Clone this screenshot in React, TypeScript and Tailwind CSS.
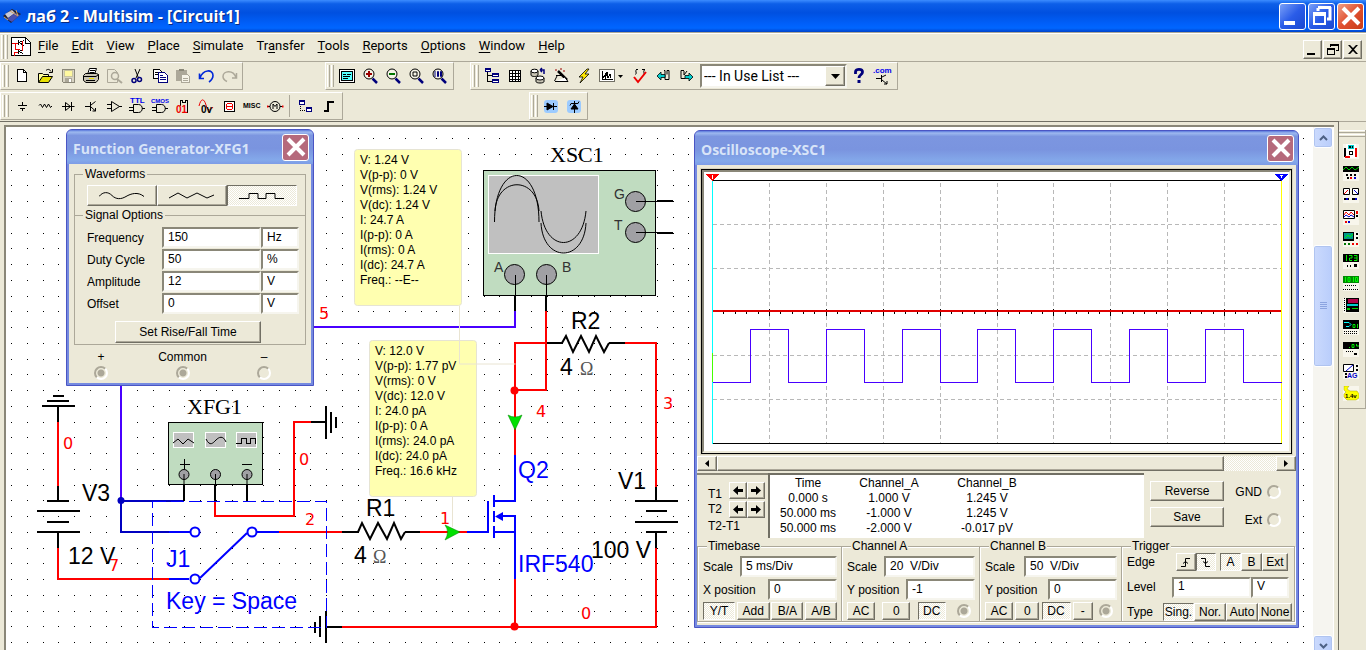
import React from 'react';
import clsx from 'clsx';

const raised =
  'border border-t-white border-l-white border-r-[#716f64] border-b-[#716f64] bg-[#ece9d8] shadow-[inset_-1px_-1px_0_#aca899]';
const pressed =
  'border border-t-[#716f64] border-l-[#716f64] border-r-white border-b-white bg-[repeating-conic-gradient(#fff_0_25%,#ece9d8_0_50%)] bg-[length:2px_2px]';
const sunken =
  'border-2 border-t-[#8a8778] border-l-[#8a8778] border-r-[#f6f5ee] border-b-[#f6f5ee] bg-white';

/* ---------- toolbar icons ---------- */

const Icon: React.FC<{ children: React.ReactNode; smooth?: boolean }> = ({ children, smooth }) => (
  <svg
    width="20"
    height="20"
    viewBox="0 0 20 20"
    fill="none"
    stroke="#000"
    shapeRendering={smooth ? 'auto' : 'crispEdges'}
    aria-hidden="true"
  >
    {children}
  </svg>
);

const Lens: React.FC<{ children: React.ReactNode }> = ({ children }) => (
  <Icon smooth>
    <path d="M12.500 12.500l4.500 4.500" stroke="#00007b" strokeWidth="2.500" />
    <circle cx="9" cy="8" r="5" fill="#f6f4e8" />
    {children}
  </Icon>
);

const fileIcons: [string, React.ReactNode][] = [
  ['New', <Icon><path d="M5.500 3.500h6l3 3v9h-9z" fill="#fff" /><path d="M11.500 3.500v3h3" /></Icon>],
  ['Open', (
    <Icon smooth>
      <path d="M3.500 16V7.500h4l1 1h5V11" fill="#ff9" />
      <path d="M3.500 16.500l4-6h10l-4 6z" fill="#e8e000" />
      <path d="M11 4.500c2-2 4-1 5 1m1.500-2.500v3.500h-3.500" />
    </Icon>
  )],
  ['Save', (
    <Icon>
      <path d="M4 3.500h12.500v13h-11l-1.500-2z" fill="#d8d4c4" stroke="#8a8778" />
      <path d="M6 4h8v6H6z" fill="#fff9a0" stroke="#c8c4a0" />
      <path d="M7 12h7v4H7z" fill="#aca899" stroke="none" />
      <path d="M11 13h2v3h-2z" fill="#fff" stroke="none" />
    </Icon>
  )],
  ['Print', (
    <Icon smooth>
      <path d="M6.500 8.500l2-6h7l-2 6" fill="#fff" />
      <path d="M9 4.500h5M8.500 6.500h5" />
      <path d="M2.500 9.500l2-2h11l2 1v5l-2.500 3h-10l-2.500-2z" fill="#c8c4b4" />
      <path d="M3 10.500h12l2.500-2M5 14.500h9" />
      <path d="M8 12.500h5" stroke="#e8e000" />
    </Icon>
  )],
  ['Print preview', (
    <Icon smooth>
      <path d="M3.500 3.500h7l3 3v10h-10z" stroke="#aca899" />
      <circle cx="11" cy="10" r="3.500" fill="#ece9d8" stroke="#aca899" strokeWidth="1.500" />
      <path d="M13 13l5 4" stroke="#aca899" strokeWidth="2" />
    </Icon>
  )],
  ['Cut', (
    <Icon smooth>
      <path d="M8 3l3.500 9M13 3l-4 9" />
      <circle cx="7" cy="14.500" r="2" stroke="#00007b" strokeWidth="1.500" />
      <circle cx="12.500" cy="13.500" r="2" stroke="#00007b" strokeWidth="1.500" />
    </Icon>
  )],
  ['Copy', (
    <Icon>
      <path d="M3.500 3.500h6l2 2v7h-8z" fill="#fff" />
      <path d="M5 6.500h4M5 8.500h4" />
      <path d="M8.500 6.500h6l3 3v7h-9z" fill="#fff" stroke="#00007b" />
      <path d="M10 9.500h3M10 11.500h6M10 13.500h6" stroke="#00007b" />
    </Icon>
  )],
  ['Paste', (
    <Icon>
      <path d="M3 4h11v11H3z" fill="#aca899" stroke="none" />
      <path d="M6 3h5v2H6z" fill="#8a8778" stroke="none" />
      <path d="M8.500 8.500h6l2 2v6h-8z" fill="#f6f4e8" stroke="#aca899" />
      <path d="M10 12.500h5M10 14.500h5" stroke="#aca899" />
    </Icon>
  )],
  ['Undo', <Icon smooth><path d="M3.500 7.500v5H8M4 12C7 3 17 3 17 9.500c0 3-2 5-4 6.500" stroke="#0028d8" strokeWidth="1.600" /></Icon>],
  ['Redo', <Icon smooth><path d="M17.500 7v5H13M17 11.500C14 3 4 5 4 10.500c0 3 2 4 4 5" stroke="#aca899" strokeWidth="1.500" /></Icon>],
];

const zoomIcons: [string, React.ReactNode][] = [
  ['Full screen', (
    <Icon>
      <path d="M2.500 3.500h15v13h-15z" fill="#fff" />
      <path d="M4.500 5.500h11v9h-11z" fill="#5ff" />
      <path d="M6 8.500h3M10 8.500h4M6 10.500h7M6 12.500h5" />
    </Icon>
  )],
  ['Zoom in', <Lens><path d="M9 5v6M6 8h6" stroke="#900" strokeWidth="2" /></Lens>],
  ['Zoom out', <Lens><path d="M6 8h6" stroke="#070" strokeWidth="2" /></Lens>],
  ['Zoom area', <Lens><path d="M7 6h4v4H7z" /></Lens>],
  ['Zoom 100', <Lens><path d="M6 5v6M8.500 5.500h1v5h-1zM11.500 5.500h1v5h-1z" stroke="#00007b" /></Lens>],
];

const designIcons: [string, React.ReactNode][] = [
  ['Design toolbox', (
    <Icon>
      <path d="M5.500 6v9h6M5.500 9.500h6" />
      <path d="M3.500 2.500h5v3h-5zM10.500 7.500h6v3h-6zM10.500 13.500h6v3h-6z" fill="#fff" stroke="#00007b" />
      <path d="M3 3h6M10 8h7M10 14h7" stroke="#00007b" strokeWidth="2" />
    </Icon>
  )],
  ['Spreadsheet', (
    <Icon>
      <path d="M4.500 4.500h11v11h-11z" fill="#fff" />
      <path d="M4 7.500h12M4 10.500h12M4 13.500h12M7.500 4v12M10.500 4v12M13.500 4v12" />
    </Icon>
  )],
  ['Database', (
    <Icon smooth>
      <path d="M3 5v4c0 2 7 2 7 0V5" fill="#c8c4b4" />
      <ellipse cx="6.500" cy="5" rx="3.500" ry="1.800" fill="#fff" />
      <path d="M8 12v3.500c0 2 8 2 8 0V12" fill="#c8c4b4" />
      <ellipse cx="12" cy="12" rx="4" ry="2" fill="#fff" />
      <path d="M12 4h4v4M12 4l2-2M12 4l2 2" stroke="#00007b" strokeWidth="1.500" />
    </Icon>
  )],
  ['Wizard', (
    <Icon smooth>
      <path d="M7 5l9 9" strokeWidth="2.500" />
      <path d="M5 9.500h5M4 15.500h13l-3-4M3.500 15l3-6" fill="#fff" />
      <path d="M4 4h2M9 3h2M12 5h2" stroke="#900" />
    </Icon>
  )],
  ['Run analysis', <Icon smooth><path d="M13 3L5 11h4l-3 6 9-9h-4l4-5z" fill="#ffe600" strokeWidth="0.800" /></Icon>],
  ['Grapher', (
    <Icon>
      <path d="M2.500 3.500h15v12h-15z" fill="#fff" stroke="#716f64" />
      <path d="M5.500 5v8.500h10M6 12l2-3v4l2-7 1 6 2-4 1 4" />
    </Icon>
  )],
];

const checkIcons: [string, React.ReactNode][] = [
  ['Rules check', <Icon smooth><path d="M6 3.500h2m4 0h3M6.500 3.500c-2 2 1 3-1 5m9-5c-2 3 1 4-1 6" /><path d="M4 11l4 5 8-10" stroke="#e00" strokeWidth="2" /></Icon>],
  ['Back annotate', (
    <Icon smooth>
      <path d="M11 4.500h1v9h4v-9h-2v4" />
      <path d="M4 10l4-4v2.500h4v3H8V14z" fill="#0cc" strokeWidth="0.800" />
    </Icon>
  )],
  ['Forward annotate', (
    <Icon smooth>
      <path d="M8 4.500H5v8h4M8 5v4l3-4" />
      <path d="M17 11l-4-4v2.500H9v3h4V15z" fill="#0cc" strokeWidth="0.800" />
    </Icon>
  )],
];

const helpIcons: [string, React.ReactNode][] = [
  ['Help', (
    <Icon smooth>
      <path d="M6.500 8V6c0-3.500 7-3.500 7 0 0 3-3.500 2.500-3.500 6" stroke="#00007b" strokeWidth="2.800" />
      <path d="M8.500 14h3v3h-3z" fill="#00007b" stroke="none" />
    </Icon>
  )],
  ['Web', (
    <Icon smooth>
      <text x="1" y="7" fontSize="8" fontWeight="bold" fontFamily="Liberation Sans, sans-serif" fill="#00e" stroke="none">.com</text>
      <path d="M4 12.500h5M9.500 9v7M10 11l4-2M10 14l5 4m0-3v3h-3" />
    </Icon>
  )],
];

const pixelLabel = 'Liberation Sans, sans-serif';

const partIcons: [string, React.ReactNode][] = [
  ['Source', <Icon><path d="M10.500 6v3M6 9.500h9M8 12.500h5M10.500 13v2" /></Icon>],
  ['Basic', <Icon smooth><path d="M4 9.500l1.500-1.500 2 3.500 2-3.500 2 3.500 2-3.500 2 3.500 1.500-1.500" /></Icon>],
  ['Diode', <Icon smooth><path d="M4 10.500h12.500M7.500 6.500v8l5-4zM13.500 6v9" /></Icon>],
  ['Transistor', <Icon smooth><path d="M4 10.500h5M9.500 6v9M10 9l4.500-3.500M10 11l4.500 4m0-3v3h-3" /></Icon>],
  ['Analog', <Icon smooth><path d="M7.500 5.500v10l8-5zM3 8.500h4.500M3 12.500h4.500M15 10.500h3" /></Icon>],
  ['TTL', (
    <Icon smooth>
      <path d="M6.500 8.500v8h5c5 0 5-8 0-8zM2 11.500h4.500M2 14.500h4.500M15 12.500h3" />
      <text x="3" y="7" fontSize="8" fontWeight="bold" fontFamily={pixelLabel} fill="#00e" stroke="none">TTL</text>
    </Icon>
  )],
  ['CMOS', (
    <Icon smooth>
      <path d="M6.500 8.500v8h5c5 0 5-8 0-8zM2 11.500h4.500M2 14.500h4.500M15 12.500h3" />
      <text x="1" y="7" fontSize="6" fontWeight="bold" fontFamily={pixelLabel} fill="#00e" stroke="none">CMOS</text>
    </Icon>
  )],
  ['Misc digital', (
    <Icon>
      <path d="M7.500 10V4.500h2v2h3v-2h2v12h-3" />
      <text x="3" y="17" fontSize="10" fontWeight="bold" fontFamily={pixelLabel} fill="#e00" stroke="none">01</text>
    </Icon>
  )],
  ['Mixed', (
    <Icon smooth>
      <path d="M3 10C5 2 8 2 10 9s4 6 7 2" stroke="#e00" />
      <text x="5" y="17" fontSize="10" fontWeight="bold" fontFamily={pixelLabel} fill="#000" stroke="none">0v</text>
    </Icon>
  )],
  ['Indicator', (
    <Icon>
      <path d="M5.500 5.500h10v10h-10z" fill="#fff" />
      <path d="M8 7.500h5M8 10.500h5M8 13.500h5M7.500 8v5M13.500 8v5" stroke="#e00" />
    </Icon>
  )],
  ['Misc', (
    <Icon smooth>
      <text x="1" y="12" fontSize="7" fontWeight="bold" fontFamily={pixelLabel} fill="#000" stroke="none">MISC</text>
    </Icon>
  )],
  ['Electromechanical', (
    <Icon smooth>
      <circle cx="10" cy="10.500" r="5" />
      <path d="M8 13V8l2 2.500L12 8v5M3 10.500h2M15 10.500h3" />
      <path d="M2 10.500h1.500M17 10.500h1.500" stroke="#e00" strokeWidth="2" />
    </Icon>
  )],
];

const hierarchyIcons: [string, React.ReactNode][] = [
  ['Hierarchical block', (
    <Icon>
      <path d="M4.500 8v6.500h5" strokeDasharray="1 1" />
      <path d="M3.500 4.500h5v4h-5zM10.500 11.500h5v4h-5z" fill="#fff" stroke="#00007b" />
      <path d="M3 5h6M10 12h6" stroke="#00007b" strokeWidth="2" />
    </Icon>
  )],
  ['Bus', <Icon><path d="M5 15h4V6h6" strokeWidth="2" /></Icon>],
];

const virtualIcons: [string, React.ReactNode][] = [
  ['Virtual diode', (
    <Icon smooth>
      <rect x="3" y="4" width="14" height="13" rx="3" fill="#9ccbff" stroke="none" />
      <path d="M3 10.500h13M6 7l6 3.500L6 14z" fill="#000" /><path d="M12.500 7v7" />
    </Icon>
  )],
  ['Virtual zener', (
    <Icon smooth>
      <rect x="3" y="4" width="14" height="13" rx="3" fill="#9ccbff" stroke="none" />
      <path d="M10.500 5v12M7 13l3.500-5 3.500 5z" fill="#000" /><path d="M6 9.500l1-2h7l1-2" />
    </Icon>
  )],
];

const Grip = () => (
  <div className="flex w-[9px] shrink-0 gap-px py-0.5 pl-px">
    <span className="w-[3px] border-r border-l border-l-white border-r-[#aca899]" />
    <span className="w-[3px] border-r border-l border-l-white border-r-[#aca899]" />
  </div>
);

const Tools: React.FC<{ items: [string, React.ReactNode][] }> = ({ items }) => (
  <>
    {items.map(([label, icon]) => (
      <button key={label} aria-label={label} className="flex w-[23px] items-center justify-center">
        {icon}
      </button>
    ))}
  </>
);

const Toolbar: React.FC<{ className?: string; children: React.ReactNode }> = ({ className, children }) => (
  <div className={clsx('flex h-7 border border-t-white border-l-white border-r-[#aca899] border-b-[#aca899]', className)}>
    <Grip />
    {children}
  </div>
);

/* ---------- schematic ---------- */

const PITCH = 15.75;
const gridDots = () => {
  let d = '';
  for (let row = 0; row < 60; row++) {
    for (let col = 0; col < 160; col++) {
      d += `M${Math.round(11 + col * PITCH)} ${Math.round(138 + row * PITCH)}h1v1h-1z`;
    }
  }
  return d;
};
const dots = gridDots();

const netLabels: [number, number, string][] = [
  [319, 319, '5'], [663, 409, '3'], [536, 417, '4'], [63, 449, '0'], [299, 465, '0'],
  [305, 525, '2'], [440, 524, '1'], [581, 619, '0'], [109, 571, '7'],
];

const partLabels: [number, number, string][] = [
  [571, 329, 'R2'], [560, 375, '4'], [618, 489, 'V1'], [366, 516, 'R1'], [354, 563, '4'],
  [591, 558, '100 V'], [82, 501, 'V3'], [68, 564, '12 V'],
];

const blueLabels: [number, number, string][] = [
  [518, 478, 'Q2'], [518, 572, 'IRF540'], [166, 567, 'J1'], [166, 609, 'Key = Space'],
];

const probes = [
  {
    x: 354, y: 149,
    lines: ['V: 1.24 V', 'V(p-p): 0 V', 'V(rms): 1.24 V', 'V(dc): 1.24 V', 'I: 24.7 A', 'I(p-p): 0 A', 'I(rms): 0 A', 'I(dc): 24.7 A', 'Freq.: --E--'],
  },
  {
    x: 369, y: 340,
    lines: ['V: 12.0 V', 'V(p-p): 1.77 pV', 'V(rms): 0 V', 'V(dc): 12.0 V', 'I: 24.0 pA', 'I(p-p): 0 A', 'I(rms): 24.0 pA', 'I(dc): 24.0 pA', 'Freq.: 16.6 kHz'],
  },
];

const Schematic = () => (
  <svg className="absolute inset-0 h-full w-full" fill="none" fontFamily="Liberation Sans, sans-serif">
    <g transform="translate(-6 -127)">
      <path d={dots} fill="#000" shapeRendering="crispEdges" />

      <g stroke="#f00" strokeWidth="2" shapeRendering="crispEdges">
        <path d="M58 422v64M58 547v32h111M215 501v15h79v-94h17M279 532h63M420 532h47" />
        <path d="M547 343h-32v112M515 390h31v-79M625 343h31v144M656 548v79H342M515 579v48" />
      </g>
      <path d="M314 327h201v-16M121 386v115" stroke="#4800ff" strokeWidth="2" shapeRendering="crispEdges" />
      <path d="M121 501h63M121 501v31h48" stroke="#0000c0" strokeWidth="2" shapeRendering="crispEdges" />

      {/* grounds, batteries and pin stubs */}
      <g stroke="#000" strokeWidth="2" shapeRendering="crispEdges">
        <path d="M53 396h11M47 401h22M42 406h33M58 406v16M58 486v15M47 501h22M37 511h43M47 522h22M37 532h43M58 532v16" />
        <path d="M311 422h15M326 406v33M331 412v21M336 417v11" />
        <path d="M326 611v32M320 616v21M315 622v11M326 627h16" />
        <path d="M656 487v14M635 501h43M646 511h21M635 522h43M646 532h21M656 532v16" />
        <path d="M342 532h16M405 532h15M547 343h15M609 343h16M515 296v15M546 296v15M657 201h16M657 233h16" />
        <path d="M184 485v16M215 485v16M247 485v16" />
      </g>
      <path d="M358 532l4-9 8 16 8-16 9 16 7-16 7 16 4-7M562 343l4-7 7 16 8-16 8 16 7-16 8 16 5-9" stroke="#000" strokeWidth="2" />

      {/* switch */}
      <path d="M152.500 501.500h174v126h-174z" stroke="#00f" strokeDasharray="13 5" shapeRendering="crispEdges" />
      <g stroke="#00f" strokeWidth="2">
        <path d="M169 532h21M169 579h20M257 532h22M200 578l47-45" />
        <circle cx="195" cy="532" r="4.500" fill="#fff" />
        <circle cx="195" cy="579" r="4.500" fill="#fff" />
        <circle cx="252" cy="532" r="4.500" fill="#fff" />
      </g>

      {/* mosfet */}
      <g stroke="#00f" strokeWidth="2" shapeRendering="crispEdges">
        <path d="M515 455v46h-21M494 495v12M494 511v11M494 526v12M488 501v31h-21M494 532h21M503 516h12v63" />
      </g>
      <path d="M495 516.500l8-4.500v9z" fill="#00f" />

      <circle cx="121" cy="500.500" r="3.500" fill="#0000c0" />
      <circle cx="514.500" cy="390.500" r="4" fill="#f00" />
      <circle cx="514.500" cy="626.500" r="4" fill="#f00" />

      {/* function generator symbol */}
      <g shapeRendering="crispEdges">
        <path d="M168.500 422.500h94v62h-94z" fill="#c0dcc0" stroke="#000" />
        <path d="M173.500 432.500h20v15h-20zM205.500 432.500h20v15h-20zM236.500 432.500h20v15h-20z" fill="#c0c0c0" stroke="#fff" />
        <path d="M236 443.500h5.500v-5h5v5h4v-5h5v5M184.500 459v10M180 464.500h10M242 464.500h10" stroke="#000" />
      </g>
      <path d="M173 443l5-4 5 5 5-5 6 4M206 439c4 8 7 4 10 1s7-5 10 2" stroke="#000" />
      {[184, 215.5, 247].map(cx => (
        <g key={cx} stroke="#000">
          <circle cx={cx} cy="474.500" r="5" fill="#a0a0a4" />
          <path d={`M${cx} 474v11`} />
        </g>
      ))}

      {/* oscilloscope symbol */}
      <g shapeRendering="crispEdges">
        <path d="M483.500 170.500h172v125h-172z" fill="#c0dcc0" stroke="#000" />
        <path d="M488.500 175.500h110v78h-110z" fill="#c0c0c0" stroke="#fff" />
      </g>
      <g stroke="#000">
        <path d="M494.500 222C494.500 160 539 160 539 222M495 211c2-35 42-35 44 0M541 223c2 40 43 40 45 0M541 211c4 42 41 42 45 0" />
        <circle cx="514.500" cy="274.500" r="10" fill="#a0a0a4" />
        <circle cx="546.500" cy="274.500" r="10" fill="#a0a0a4" />
        <circle cx="635.500" cy="201.500" r="10" fill="#a0a0a4" />
        <circle cx="635.500" cy="232.500" r="10" fill="#a0a0a4" />
        <path d="M515.500 275v21M546.500 275v21M636 201.500h21M636 232.500h21" />
      </g>
      <g fill="#333" fontSize="14">
        <text x="494" y="272">A</text>
        <text x="562" y="272">B</text>
        <text x="614" y="199">G</text>
        <text x="614" y="230">T</text>
      </g>

      {probes.map(probe => (
        <g key={probe.x}>
          <rect x={probe.x + 0.5} y={probe.y + 0.5} width="107" height="156" rx="3" fill="#ffffb0" stroke="#e6e4d4" />
          <text fontSize="12" fill="#000">
            {probe.lines.map((line, i) => (
              <tspan key={line} x={probe.x + 6} y={probe.y + 15 + i * 15}>{line}</tspan>
            ))}
          </text>
        </g>
      ))}
      <path d="M459.500 306v58h56M452.500 497v30" stroke="#e9e4d2" />
      <path d="M508 415q7 4 14 0l-7 15zM445 525q5 7 0 15l15-8z" fill="#00e000" stroke="#008000" strokeWidth="0.500" />

      <g fill="#000" fontSize="22" fontFamily="Liberation Serif, serif">
        <text x="550" y="162">XSC1</text>
        <text x="187" y="414">XFG1</text>
      </g>
      <g fill="#555" fontSize="18" fontFamily="Liberation Serif, serif">
        <text x="580" y="375">Ω</text>
        <text x="373" y="563">Ω</text>
      </g>
      <g fontSize="23">
        <g fill="#000">{partLabels.map(([x, y, t]) => <text key={`${x}-${y}`} x={x} y={y}>{t}</text>)}</g>
        <g fill="#00f">{blueLabels.map(([x, y, t]) => <text key={t} x={x} y={y}>{t}</text>)}</g>
      </g>
      <g fill="#f00" fontSize="16" fontFamily="DejaVu Sans, sans-serif">
        {netLabels.map(([x, y, t]) => <text key={`${x}-${y}`} x={x} y={y}>{t}</text>)}
      </g>
    </g>
  </svg>
);

/* ---------- instrument windows ---------- */

const Radio: React.FC<{ name: string; label: string; on?: boolean }> = ({ name, label, on }) => (
  <input
    type="radio"
    name={name}
    aria-label={label}
    defaultChecked={on}
    className="size-3.5 shrink-0 appearance-none rounded-full border-2 border-t-[#aca899] border-r-white border-b-white border-l-[#aca899] checked:bg-[radial-gradient(#aca899_3px,transparent_4px)]"
  />
);

const Field: React.FC<{ label: string; value: string; className?: string }> = ({ label, value, className }) => (
  <input aria-label={label} defaultValue={value} className={clsx(sunken, 'h-[21px] min-w-0 pb-0.5 pl-1', className)} />
);

const Key: React.FC<{ down?: boolean; label?: string; className?: string; children: React.ReactNode }> = ({ down, label, className, children }) => (
  <button
    aria-label={label}
    aria-pressed={down}
    className={clsx(down ? pressed : raised, 'flex items-center justify-center whitespace-nowrap', className)}
  >
    {children}
  </button>
);

const Dialog: React.FC<{ title: string; className: string; children: React.ReactNode }> = ({ title, className, children }) => (
  <section className={clsx('absolute flex flex-col rounded-t-md border border-[#4a55c4] bg-[#758ae0] px-0.5 pb-0.5 font-[Liberation_Sans,sans-serif] text-xs text-black', className)}>
    <header className="-mx-0.5 flex h-[34px] shrink-0 items-center justify-between rounded-t-[5px] bg-[linear-gradient(#5a78dc_0,#9db9ef_6%,#7c96e0_16%,#7a94df_55%,#84a9ea_88%,#7d9ce6)] pr-1 pl-1.5">
      <h2 className="pt-1 font-[Open_Sans,sans-serif] text-sm font-bold text-[#d8e4f8]">{title}</h2>
      <button aria-label={`Close ${title}`} className="flex size-[27px] items-center justify-center rounded-[3px] border border-white bg-[#b56a7c]">
        <svg width="20" height="20" viewBox="0 0 20 20" stroke="#fff" strokeWidth="4"><path d="M2 2l16 16M18 2L2 18" /></svg>
      </button>
    </header>
    <div className="flex-1 bg-[#ece9d8]">{children}</div>
  </section>
);

const etched = 'border-[#aca899] shadow-[inset_1px_1px_0_#fff,1px_1px_0_#fff]';

const signalRows = [
  ['Frequency', '150', 'Hz'],
  ['Duty Cycle', '50', '%'],
  ['Amplitude', '12', 'V'],
  ['Offset', '0', 'V'],
];

const waveforms: [string, string][] = [
  ['Sine', 'M0 6.500c4-5 9-5 13-1s9 4 14 1 12-5 18 0'],
  ['Triangle', 'M0 8l9-5 9 5 10-5 10 5 7-3'],
  ['Square', 'M0 8.500h10v-5h9v5h8v-5h9v5h9'],
];

const FunctionGenerator = () => (
  <Dialog title="Function Generator-XFG1" className="top-0.5 left-[60px] w-[248px]">
    <div className="px-[5px] pt-[3px]">
      <fieldset className="w-[232px] border border-b-0 border-[#aca899] pb-[9px] pl-3">
        <legend className="-ml-1 px-0.5 leading-[14px]">Waveforms</legend>
        <div className="flex pt-1">
          {waveforms.map(([name, d], i) => (
            <Key key={name} label={name} down={i === 2} className="h-[21px] w-[70px]">
              <svg width="46" height="11" viewBox="0 0 46 11" fill="none" stroke="#000"><path d={d} /></svg>
            </Key>
          ))}
        </div>
      </fieldset>
      <fieldset className="-mt-[7px] w-[232px] border border-[#aca899] pb-px pl-3">
        <legend className="-ml-1 px-0.5 leading-[14px]">Signal Options</legend>
        <div className="flex flex-col gap-px pt-[5px]">
          {signalRows.map(([name, value, unit]) => (
            <div key={name} className="flex h-[21px] items-center">
              <label htmlFor={name} className="w-[75px]">{name}</label>
              <input id={name} defaultValue={value} className={clsx(sunken, 'h-[21px] w-[99px] pb-0.5 pl-1')} />
              <Field label={`${name} unit`} value={unit} className="w-[38px]" />
            </div>
          ))}
        </div>
        <Key className="mt-[7px] ml-7 h-[22px] w-[146px]">Set Rise/Fall Time</Key>
      </fieldset>
      <div className="flex justify-between pt-1 pr-[15px] pb-[3px] leading-4">
        {['+', 'Common', '–'].map((t, i) => (
          <label key={t} className="flex w-[54px] flex-col items-center gap-px">
            {t}
            <Radio name={`terminal-${i}`} label={t} on={i < 2} />
          </label>
        ))}
      </div>
    </div>
  </Dialog>
);

const gridX = [769, 826, 883, 940, 997, 1053, 1110, 1167, 1224];
const gridY = [224, 268, 355, 399];

const scopeTicks = () => {
  let d = '';
  for (let i = 1; i < 50; i++) {
    const x = Math.round(712 + i * 11.38);
    d += i % 5 === 0 ? `M${x}.5 309v7` : `M${x}.5 312v2`;
  }
  return d;
};

const Plot = () => (
  <svg className="block h-full w-full" fill="none" shapeRendering="crispEdges">
    <g transform="translate(-704 -172)">
      <g stroke="#b8b8b8" strokeDasharray="4 3">
        {gridX.map(x => <path key={x} d={`M${x}.5 183v260`} />)}
        {gridY.map(y => <path key={y} d={`M713 ${y}.5h568`} />)}
      </g>
      <path d="M712 180.500h570M712 443.500h570M712 311.500h570" stroke="#000" />
      <path d={scopeTicks()} stroke="#000" />
      <path d="M713 311h568" stroke="#e00000" strokeWidth="2" />
      <path d="M1281.500 181v262" stroke="#ff0" />
      <path d="M712.500 180v264" stroke="#0ff" />
      <path d="M712.500 353v29" stroke="#4f0" />
      <path
        d="M713 382.500h37.500v-53h38v53h38v-53h38v53h38v-53h38v53h37v-53h38v53h38v-53h38v53h38v-53h38v53h38v-53h38v53h38"
        stroke="#4800ff"
      />
      <path d="M706 174h13l-6.500 7z" fill="#f00" />
      <path d="M1275 174h13l-6.500 7z" fill="#00f" />
      <path d="M712.500 175v4M1280 175.500h3M1281.500 176v2" stroke="#fff" />
    </g>
  </svg>
);

const readings = [
  ['0.000 s', '1.000 V', '1.245 V'],
  ['50.000 ms', '-1.000 V', '1.245 V'],
  ['50.000 ms', '-2.000 V', '-0.017 pV'],
];

const Arrow: React.FC<{ left?: boolean }> = ({ left }) => (
  <svg width="10" height="9" viewBox="0 0 10 9" fill="#000">
    <path d={left ? 'M0 4.500L5 0v3h5v3H5v3z' : 'M10 4.500L5 0v3H0v3h5v3z'} />
  </svg>
);

const Group: React.FC<{ title: string; className?: string; children: React.ReactNode }> = ({ title, className, children }) => (
  <fieldset className={clsx('min-w-0 border border-r-0 pl-[5px] last:border-r', etched, className)}>
    <legend className="ml-1 bg-[#ece9d8] px-px leading-[14px]">{title}</legend>
    {children}
  </fieldset>
);

const Channel: React.FC<{ title: string; scale: string; position: string; scaleGap: string; keys: [string, string][]; axis: string; radio?: boolean }> = ({
  title, scale, position, scaleGap, keys, axis, radio,
}) => (
  <Group title={title}>
    <div className="flex flex-col gap-0.5 pt-[3px] pr-1">
      <div className="flex items-center">
        <span className={scaleGap}>Scale</span>
        <Field label={`${title} scale`} value={scale} className="flex-1" />
      </div>
      <div className="flex items-center">
        <span className="flex-1 whitespace-nowrap">{axis} position</span>
        <Field label={`${title} position`} value={position} className="w-[69px]" />
      </div>
      <div className="flex items-center justify-between">
        {keys.map(([t, width]) => (
          <Key key={t} down={t === 'DC' || t === 'Y/T'} className={clsx('h-[18px]', width)}>{t}</Key>
        ))}
        {radio && <span className="flex px-1"><Radio name={title} label={`${title} terminal`} on /></span>}
      </div>
    </div>
  </Group>
);

const Oscilloscope = () => (
  <Dialog title="Oscilloscope-XSC1" className="top-[3px] left-[688px] w-[605px]">
    <div className="pt-1">
      <div className="mx-1 h-[285px] border border-black bg-white shadow-[0_0_0_1px_#d8d4c0]">
        <div className="h-full border-2 border-t-[#8a8778] border-r-[#ece9d8] border-b-[#ece9d8] border-l-[#8a8778]"><Plot /></div>
      </div>
      <div className="mt-0.5 flex h-[15px]">
        <Key label="Scroll left" className="w-5"><svg width="4" height="7" viewBox="0 0 4 7"><path d="M4 0v7L0 3.500z" /></svg></Key>
        <div className={clsx(raised, 'w-[507px]')} />
        <div className="flex-1 bg-[repeating-conic-gradient(#fff_0_25%,#ece9d8_0_50%)] bg-[length:2px_2px]" />
        <Key label="Scroll right" className="w-5"><svg width="4" height="7" viewBox="0 0 4 7"><path d="M0 0v7l4-3.500z" /></svg></Key>
      </div>
      <div className="flex h-[68px] pt-0.5 pb-px">
        <div className="flex w-[71px] border-t-2 border-[#8a8778] pl-[11px]">
          <div className="w-[21px] pt-3 leading-[15px] whitespace-nowrap">
            <p>T1</p>
            <p>T2</p>
            <p className="pt-0.5">T2-T1</p>
          </div>
          <div className="flex flex-col gap-0.5 pt-[7px]">
            {['T1', 'T2'].map(t => (
              <div key={t} className="flex">
                <Key label={`${t} left`} className="h-[17px] w-[18px]"><Arrow left /></Key>
                <Key label={`${t} right`} className="h-[17px] w-[18px]"><Arrow /></Key>
              </div>
            ))}
          </div>
        </div>
        <div className="w-[376px] border-t-2 border-l-2 border-[#716f64] bg-white pt-px">
          <table className="w-[272px] table-fixed text-center leading-[15px]">
            <thead>
              <tr>
                <th className="w-[76px] font-normal">Time</th>
                <th className="w-[86px] font-normal">Channel_A</th>
                <th className="font-normal">Channel_B</th>
              </tr>
            </thead>
            <tbody>
              {readings.map((row, i) => (
                <tr key={i}>{row.map((cell, j) => <td key={j}>{cell}</td>)}</tr>
              ))}
            </tbody>
          </table>
        </div>
        <div className="flex flex-col gap-1.5 pt-2 pl-1.5">
          <Key className="h-5 w-[74px]">Reverse</Key>
          <Key className="h-5 w-[74px]">Save</Key>
        </div>
        <div className="flex flex-1 flex-col items-end gap-3.5 pt-3 pr-[15px]">
          <label className="flex items-center gap-[5px] leading-[14px]">GND <Radio name="gnd" label="GND" /></label>
          <label className="flex items-center gap-[5px] leading-[14px]">Ext <Radio name="ext" label="Ext" /></label>
        </div>
      </div>
      <div className="grid grid-cols-[144px_138px_142px_1fr] pr-px pb-[3px]">
        <Channel title="Timebase" axis="X" scale="5 ms/Div" position="0" scaleGap="w-[37px]"
          keys={[['Y/T', 'w-8'], ['Add', 'w-[33px]'], ['B/A', 'w-8'], ['A/B', 'w-8']]} />
        <Channel title="Channel A" axis="Y" scale="20  V/Div" position="-1" scaleGap="w-[37px]" radio
          keys={[['AC', 'w-7'], ['0', 'w-7'], ['DC', 'w-7']]} />
        <Channel title="Channel B" axis="Y" scale="50  V/Div" position="0" scaleGap="w-[39px]" radio
          keys={[['AC', 'w-7'], ['0', 'w-6'], ['DC', 'w-[29px]'], ['-', 'w-5']]} />
        <Group title="Trigger">
          <div className="flex h-[68px] flex-col justify-between pr-0.5">
            <div className="flex items-center pr-1">
              <span className="flex-1">Edge</span>
              <Key label="Rising edge" className="h-[18px] w-5">
                <svg width="10" height="11" viewBox="0 0 10 11" fill="none" stroke="#000"><path d="M0 9.500h4.500v-8H9M2 6.500l2.500-2 2.500 2" /></svg>
              </Key>
              <Key down label="Falling edge" className="h-[18px] w-5">
                <svg width="10" height="11" viewBox="0 0 10 11" fill="none" stroke="#000"><path d="M0 1.500h4.500v8H9M2 4.500l2.500 2 2.500-2" /></svg>
              </Key>
              <Key down className="ml-1 h-[18px] w-[21px]">A</Key>
              <Key className="h-[18px] w-[21px]">B</Key>
              <Key className="h-[18px] w-[26px]">Ext</Key>
            </div>
            <div className="flex items-center pr-[3px]">
              <label htmlFor="level" className="flex-1">Level</label>
              <input id="level" defaultValue="1" className={clsx(sunken, 'h-[21px] w-[79px] pb-0.5 pl-1')} />
              <Field label="Level unit" value="V" className="w-[38px]" />
            </div>
            <div className="flex items-center">
              <span className="flex-1">Type</span>
              <Key down className="h-[18px] w-[31px]">Sing.</Key>
              <Key className="h-[18px] w-8">Nor.</Key>
              <Key className="h-[18px] w-8">Auto</Key>
              <Key className="h-[18px] w-[34px]">None</Key>
            </div>
          </div>
        </Group>
      </div>
    </div>
  </Dialog>
);

/* ---------- instrument bar ---------- */

const instruments: [string, React.ReactNode][] = [
  ['Multimeter', <><path fill="#fff" d="M3 0h10v14H3z" /><path fill="#0cc" d="M5 1h6v4H5z" /><path fill="#000" d="M6 2h2v2H6zM9 2h1v2H9zM6 7h4v4H6z" /><path fill="#fff" d="M7 8h2v2H7z" /><path fill="#000" d="M1 4h2v9H1z" /><path fill="#e00" d="M12 4h2v9h-2zM2 12h5v2H2z" /></>],
  ['Function generator', <><path fill="#000" d="M0 0h16v6H0z" /><path stroke="#0c0" fill="none" d="M0 4l3-3 3 3 3-3 3 3 4-3" /><path fill="#000" d="M3 8h2v2H3zM7 8h2v2H7zM11 8h2v2h-2zM4 11h2v2H4z" /><path fill="#e00" d="M7 11h2v2H7z" /><path fill="#00c" d="M11 11h2v2h-2z" /></>],
  ['Wattmeter', <><path fill="#fff" stroke="#000" d="M.5.500h6v6h-6zM9.500.500h6v6h-6z" /><path stroke="#e00" d="M1 6l4-4" /><path stroke="#00c" d="M11 2l4 4" /><path fill="#000" d="M1 10h5v2H1zM9 10h5v2H9z" /><path fill="#00c" d="M3 10h2v2H3zM12 10h2v2h-2z" /></>],
  ['Oscilloscope', <><path fill="#fff" stroke="#000" d="M.5.500h11v8H.5z" /><path stroke="#e00" fill="none" d="M1 5l2-3 3 3 2-3 3 3" /><path stroke="#00c" fill="none" d="M1 7l2-2 3 2 2-2 3 2" /><path fill="#e00" d="M13 1h2v3h-2zM2 11h2v2H2z" /><path fill="#000" d="M13 5h2v2h-2z" /><path fill="#00c" d="M5 11h2v2H5z" /></>],
  ['Four channel oscilloscope', <><path fill="#000" d="M0 0h11v9H0z" /><path fill="#098" d="M1 1h9v6H1z" /><path stroke="#0e0" fill="none" d="M2 6l3-3 2 2 3-3" /><path fill="#000" d="M13 1h2v2h-2zM13 5h2v2h-2z" /><path fill="#070" d="M1 11h2v2H1zM5 11h2v2H5z" /><path fill="#e00" d="M9 11h2v2H9zM13 11h2v2h-2z" /></>],
  ['Frequency counter', <><path fill="#000" d="M0 0h16v8H0z" /><path stroke="#0e0" fill="none" d="M3.500 1v6M6 1.500h3v2.500H6.500v2.500H9M11 1.500h3v5h-3M11 4h3" /><path fill="#000" d="M4 11h1v2H4zM7 11h1v2H7zM11 10h3v3h-3z" /></>],
  ['Word generator', <><path fill="#080" d="M0 0h16v7H0z" /><path stroke="#0f0" fill="none" d="M2.500 1v5M5 1.500h2v4H5zM10.500 1v5M12.500 1.500h2v4h-2z" /><path stroke="#000" strokeDasharray="1 1" d="M2 9.500h12M0 13.500h16" /></>],
  ['Logic analyzer', <><path stroke="#000" strokeDasharray="1 1" d="M1.500 0v14" /><path fill="#000" d="M3 0h13v14H3z" /><path fill="#b00048" d="M5 1h10v4H5z" /><path fill="#0cc" d="M4 6h11v2H4z" /><path fill="#0c0" d="M4 10h3v2H4zM9 10h6v1H9z" /></>],
  ['Logic converter', <><path fill="#000" d="M0 0h16v9H0z" /><path stroke="#0ff" fill="none" d="M1 2.500h5l2 2-2 2H3" /><path stroke="#0e0" fill="none" d="M10 4.500h2v3h-2zM14.500 4v4" /><path stroke="#000" strokeDasharray="1 1" d="M1 11.500h14M1 13.500h14" /></>],
  ['Distortion analyzer', <><path fill="#000" d="M0 0h16v7H0z" /><path stroke="#0e0" fill="none" d="M6 5.500h1M9 2.500h2v3H9zM13.500 2v2H16" /><path stroke="#000" strokeDasharray="1 1" d="M3 9.500h8" /><path fill="#000" d="M11 11h3v2h-3z" /></>],
  ['Agilent generator', <><path fill="#fff" stroke="#000" d="M.5.500h10v7H.5z" /><path stroke="#00c" d="M3 7l7-6" /><path fill="#000" d="M13 1h2v2h-2zM13 5h2v2h-2zM2 9h2v2H2zM2 12h2v2H2z" /><text x="4" y="14" fontSize="7" fontWeight="bold" fill="#00c">AG</text></>],
  ['Measurement probe', <><path fill="#ff0" stroke="#aa0" strokeWidth="0.500" d="M1 0h5L4 3l3 2h7l2 3v4l-3 2H4l-3-3V8L3 6 1 4z" /><text x="2" y="12" fontSize="6" fontWeight="bold" fill="#000">1.4v</text></>],
];

const menus: [string, string, string][] = [
  ['', 'F', 'ile'], ['', 'E', 'dit'], ['', 'V', 'iew'], ['', 'P', 'lace'], ['', 'S', 'imulate'], ['Tr', 'a', 'nsfer'],
  ['', 'T', 'ools'], ['', 'R', 'eports'], ['', 'O', 'ptions'], ['', 'W', 'indow'], ['', 'H', 'elp'],
];

const TitleBar = () => (
  <header className="flex h-8 shrink-0 items-center bg-[linear-gradient(#3c8cff_0,#0d5fe8_12%,#0050e0_40%,#0060fa_75%,#0066ff_88%,#0042c8)] pr-0.5 pl-[3px]">
    <svg width="19" height="16" viewBox="0 0 19 16" className="mr-1">
      <path d="M0 8l9-7 9 5-10 9z" fill="#223" />
      <path d="M2 6l7-4 3 3-7 5z" fill="#c8c8d8" />
      <path d="M4 11l8-6 5 2-8 7z" fill="#4a50b0" />
      <path d="M1 9l4 3M7 3l8 5M13 2l2 6" stroke="#d0a060" />
    </svg>
    <h1 className="flex-1 font-[Open_Sans,sans-serif] text-base font-bold text-white [text-shadow:1px_1px_0_#0a2a80]">лаб 2 - Multisim - [Circuit1]</h1>
    <div className="flex gap-0.5">
      <button aria-label="Minimize" className="flex size-[27px] items-end rounded-[3px] border border-white bg-[linear-gradient(135deg,#7aa0f8,#2a5ce8_50%,#1a48d0)] p-1">
        <span className="h-1 w-[11px] bg-white" />
      </button>
      <button aria-label="Restore" className="flex size-[27px] items-center justify-center rounded-[3px] border border-white bg-[linear-gradient(135deg,#7aa0f8,#2a5ce8_50%,#1a48d0)]">
        <svg width="20" height="20" viewBox="0 0 20 20" fill="none" stroke="#fff" strokeWidth="2">
          <path d="M6 1.500h13M18 1v12h-3M6 2v3" strokeWidth="3" />
          <path d="M2 8h11v10H2z" /><path d="M1 8h13" strokeWidth="4" />
        </svg>
      </button>
      <button aria-label="Close" className="flex size-[27px] items-center justify-center rounded-[3px] border border-white bg-[linear-gradient(135deg,#f0a088,#e05030_50%,#c83c18)]">
        <svg width="20" height="20" viewBox="0 0 20 20" stroke="#fff" strokeWidth="4"><path d="M2 2l16 16M18 2L2 18" /></svg>
      </button>
    </div>
  </header>
);

const MenuBar = () => (
  <nav className="flex h-[30px] shrink-0 items-center border-t border-b border-[#aca899] pr-1 shadow-[inset_0_1px_0_#fff] font-[Roboto,sans-serif] text-[13px] text-black">
    <div className="flex h-full pr-0.5"><Grip /></div>
    <svg width="21" height="20" viewBox="0 0 21 20" fill="none" stroke="#000" shapeRendering="crispEdges" className="mr-[6px]">
      <path d="M.5.500h14l5 5v13H.5z" fill="#fff" />
      <path d="M14.500 1v5h5M7.500 3v5M8 5.500l5-2M8 5.500l5 3M7.500 12v5M8 14.500l4-2M8 14.500l4 2" />
      <path d="M1 6.500h6M4.500 6v6h4M11.500 4v10M3.500 19v-4H7" stroke="#e00" />
    </svg>
    <div className="flex flex-1 gap-[13px] pb-[3px]">
      {menus.map(([before, hot, after]) => (
        <button key={hot + after} className="leading-5">{before}<u className="underline-offset-2">{hot}</u>{after}</button>
      ))}
    </div>
    <div className="flex gap-px pt-1">
      {['M2 12h8v2H2z', 'M5 3h9v7h-3V9h2V5H6v1H5zM2 7h8v7H2zm1 2v4h6V9z', 'M3 4h2l3 3 3-3h2L9 8.500l4 4.500h-2L8 10l-3 3H3l4-4.500z'].map((d, i) => (
        <button key={d} aria-label={['Minimize circuit', 'Restore circuit', 'Close circuit'][i]} className={clsx(raised, 'flex size-[19px] items-center justify-center')}>
          <svg width="16" height="16" viewBox="0 0 16 16" fill="#000" fillRule="evenodd"><path d={d} /></svg>
        </button>
      ))}
    </div>
  </nav>
);

const scrollPart = 'flex shrink-0 items-center justify-center rounded-[3px] border border-white bg-[linear-gradient(90deg,#cbdafd,#b9cdfb)] shadow-[0_0_0_1px_#b0c4f0_inset]';

const App: React.FC = () => (
  <div className="flex h-screen flex-col overflow-hidden bg-[#ece9d8]">
    <TitleBar />
    <MenuBar />
    <div className="flex shrink-0">
      <Toolbar className="pr-0.5"><Tools items={fileIcons} /></Toolbar>
      <Toolbar className="ml-[82px] pr-[3px]"><Tools items={zoomIcons} /></Toolbar>
      <Toolbar className="ml-4 pr-1">
        <Tools items={designIcons} />
        <button aria-label="Grapher menu" className="w-2.5">
          <svg width="5" height="3" viewBox="0 0 5 3"><path d="M0 0h5L2.500 3z" /></svg>
        </button>
        <Tools items={checkIcons} />
        <div className="relative ml-[3px] flex items-center">
          <select aria-label="In Use List" className={clsx(sunken, 'h-6 w-[147px] appearance-none pl-0.5 font-[Roboto,sans-serif] text-sm text-black')}>
            <option>--- In Use List ---</option>
          </select>
          <span className={clsx(raised, 'pointer-events-none absolute right-0.5 flex h-5 w-5 items-center justify-center')}>
            <svg width="9" height="5" viewBox="0 0 9 5"><path d="M0 0h9L4.500 5z" /></svg>
          </span>
        </div>
        <Tools items={helpIcons} />
      </Toolbar>
    </div>
    <div className="flex shrink-0 pt-0.5 pb-px">
      <Toolbar className="pr-0.5">
        <Tools items={partIcons} />
        <span className="mx-[3px] my-0.5 w-0.5 border-l border-[#aca899]" />
        <Tools items={hierarchyIcons} />
      </Toolbar>
      <Toolbar className="ml-[186px] pr-0.5"><Tools items={virtualIcons} /></Toolbar>
    </div>

    <div className="-mb-1.5 flex min-h-0 flex-1">
      <main className="flex min-w-0 flex-1 border-t border-r border-[#716f64] pt-[3px] pr-1 pl-1">
        <div className="flex min-w-0 flex-1 border-t-2 border-l-2 border-[#8a8778]">
          <div className="relative min-w-0 flex-1 overflow-hidden bg-white">
            <Schematic />
            <FunctionGenerator />
            <Oscilloscope />
          </div>
          <div className="flex w-[21px] flex-col border-r border-white bg-[#f6f5f0]">
            <button aria-label="Scroll up" className={clsx(scrollPart, 'h-[21px]')}>
              <svg width="9" height="6" viewBox="0 0 9 6" fill="none" stroke="#4d6185" strokeWidth="2"><path d="M1 5l3.500-3.500L8 5" /></svg>
            </button>
            <div className="grow-[97]" />
            <div className={clsx(scrollPart, 'h-[122px] flex-col gap-px')}>
              {[0, 1, 2, 3].map(i => <span key={i} className="h-px w-[7px] bg-[#8ca4e0]" />)}
            </div>
            <div className="grow-[269]" />
            <button aria-label="Scroll down" className={clsx(scrollPart, 'h-[21px]')}>
              <svg width="9" height="6" viewBox="0 0 9 6" fill="none" stroke="#4d6185" strokeWidth="2"><path d="M1 1l3.500 3.500L8 1" /></svg>
            </button>
          </div>
        </div>
      </main>
      <aside className="w-[27px] border-t border-[#aca899] pt-2">
        <div className="flex flex-col items-center border-r border-b border-[#aca899] pb-1">
          <span className="h-[3px] w-full border-t border-b border-t-white border-b-[#aca899]" />
          <span className="mt-px mb-[3px] h-[3px] w-full border-t border-b border-t-white border-b-[#aca899]" />
          {instruments.map(([name, art]) => (
            <button key={name} aria-label={name} className="flex h-[22px] items-center pr-0.5">
              <svg width="16" height="15" viewBox="0 0 16 15" fontFamily="Liberation Sans, sans-serif" className="bg-[#f8f6ec]">{art}</svg>
            </button>
          ))}
        </div>
      </aside>
    </div>
  </div>
);

export default App;
